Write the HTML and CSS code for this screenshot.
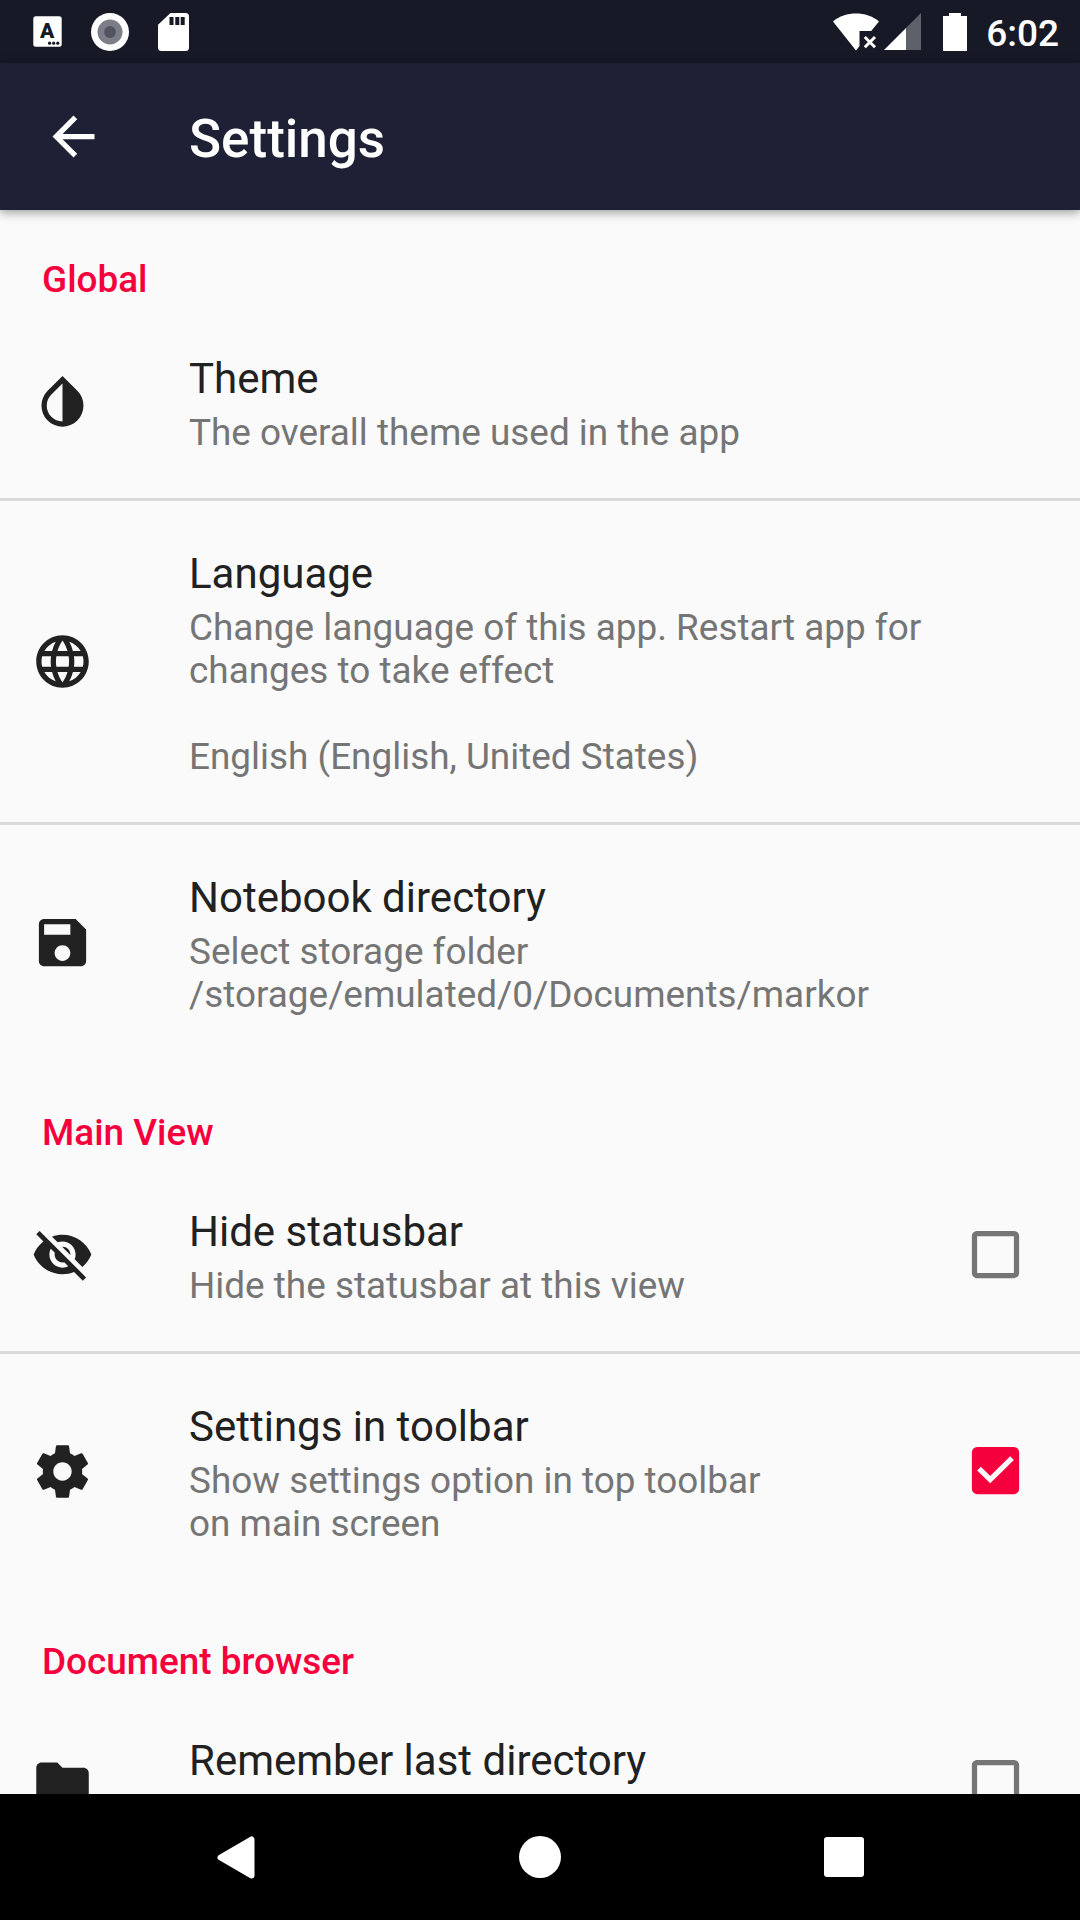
FILE: index.html
```html
<!DOCTYPE html>
<html lang="en">
<head>
<meta charset="utf-8">
<title>Settings</title>
<link rel="stylesheet" href="styles.css">
</head>
<body>
<div class="screen">
  <div class="statusbar">
    <div class="notifications">
      <svg width="29" height="31" viewBox="0 0 29 31">
        <rect x="0.3" y="0.3" width="28.4" height="30.4" rx="2.5" fill="#fff"/>
        <text class="keyboard-letter" x="14.2" y="22.4" text-anchor="middle">A</text>
        <circle cx="16.6" cy="27.2" r="1.6"/><circle cx="20.7" cy="27.2" r="1.6"/><circle cx="24.8" cy="27.2" r="1.6"/>
      </svg>
      <svg width="38" height="38" viewBox="0 0 38 38">
        <circle cx="19" cy="19" r="19" fill="#fff"/>
        <circle cx="19" cy="19" r="12.5" fill="#7c7e87"/>
        <circle cx="19" cy="19" r="5.9" fill="#51535e"/>
      </svg>
      <svg width="31" height="38" viewBox="0 0 31 38">
        <path fill="#fff" d="M12.5 0H27.5Q31 0 31 3.5V34.5Q31 38 27.5 38H3.5Q0 38 0 34.5V11.8Z"/>
        <path d="M11.5 4h4v8h-4zM17.3 4h4v8h-4zM22.7 4h4v8h-4z"/>
      </svg>
    </div>
    <div class="system">
      <svg width="46" height="38" viewBox="0 0 46 38">
        <path fill="#fff" d="M0 8.4C12.5-2.2 33.500-2.200 46 8.400L38.200 18H26.500V33L23 37.400Z"/>
        <path stroke="#fff" stroke-width="3" d="M31.800 24L42 34.200M42 24L31.800 34.200"/>
      </svg>
      <svg class="signal" width="37" height="37" viewBox="0 0 37 37">
        <path fill="#5e606a" d="M37 0V37H22V15Z"/>
        <path fill="#fff" d="M22 15V37H0Z"/>
      </svg>
      <svg class="battery" width="24" height="38" viewBox="0 0 24 38">
        <path fill="#fff" d="M6 0H18V3H24V38H0V3H6Z"/>
      </svg>
      <span class="clock">6:02</span>
    </div>
  </div>

  <header class="toolbar">
    <svg class="icon" viewBox="0 0 24 24"><path d="M20 11H7.830l5.590-5.590L12 4l-8 8 8 8 1.410-1.410L7.830 13H20v-2z"/></svg>
    <h1 class="toolbar-title">Settings</h1>
  </header>

  <main class="list">
    <section class="category">
      <h2 class="category-title">Global</h2>
      <div class="row">
        <svg class="icon" viewBox="0 0 24 24"><path d="M17.660 7.930L12 2.270 6.340 7.930c-3.120 3.120-3.120 8.190 0 11.310C7.900 20.800 9.950 21.580 12 21.580s4.100-.78 5.660-2.340c3.120-3.120 3.120-8.190 0-11.310zM12 19.590c-1.600 0-3.110-.62-4.240-1.760C6.620 16.690 6 15.190 6 13.590s.62-3.110 1.760-4.240L12 5.100v14.490z"/></svg>
        <div class="row-text">
          <div class="row-title">Theme</div>
          <div class="row-summary">The overall theme used in the app</div>
        </div>
      </div>
      <div class="row">
        <svg class="icon" viewBox="0 0 24 24"><path d="M11.990 2C6.470 2 2 6.480 2 12s4.470 10 9.990 10C17.520 22 22 17.520 22 12S17.520 2 11.990 2zm6.930 6h-2.950c-.32-1.250-.78-2.450-1.380-3.560 1.840.63 3.370 1.910 4.330 3.560zM12 4.040c.83 1.200 1.480 2.530 1.910 3.960h-3.820c.43-1.430 1.080-2.760 1.910-3.960zM4.260 14C4.100 13.360 4 12.690 4 12s.1-1.360.26-2h3.380c-.08.66-.14 1.320-.14 2s.06 1.340.14 2H4.260zm.82 2h2.950c.32 1.250.78 2.450 1.380 3.560-1.840-.63-3.370-1.900-4.330-3.560zm2.950-8H5.080c.96-1.660 2.490-2.930 4.330-3.560C8.810 5.550 8.350 6.750 8.030 8zM12 19.960c-.83-1.200-1.480-2.530-1.910-3.960h3.820c-.43 1.430-1.080 2.760-1.910 3.960zM14.340 14H9.660c-.09-.66-.16-1.320-.16-2s.07-1.350.16-2h4.680c.09.65.16 1.320.16 2s-.07 1.340-.16 2zm.25 5.560c.6-1.110 1.060-2.310 1.380-3.560h2.950c-.96 1.650-2.490 2.930-4.330 3.560zM16.360 14c.08-.66.14-1.320.14-2s-.06-1.340-.14-2h3.380c.16.64.26 1.310.26 2s-.1 1.360-.26 2h-3.380z"/></svg>
        <div class="row-text">
          <div class="row-title">Language</div>
          <div class="row-summary">Change language of this app. Restart app for<br>changes to take effect<br><br>English (English, United States)</div>
        </div>
      </div>
      <div class="row">
        <svg class="icon" viewBox="0 0 24 24"><path d="M17 3H5c-1.110 0-2 .9-2 2v14c0 1.100.89 2 2 2h14c1.100 0 2-.9 2-2V7l-4-4zm-5 16c-1.660 0-3-1.340-3-3s1.340-3 3-3 3 1.340 3 3-1.340 3-3 3zm3-10H5V5h10v4z"/></svg>
        <div class="row-text">
          <div class="row-title">Notebook directory</div>
          <div class="row-summary">Select storage folder<br>/storage/emulated/0/Documents/markor</div>
        </div>
      </div>
    </section>

    <section class="category">
      <h2 class="category-title">Main View</h2>
      <div class="row">
        <svg class="icon" viewBox="0 0 24 24"><path d="M12 7c2.760 0 5 2.240 5 5 0 .65-.13 1.260-.36 1.830l2.920 2.920c1.510-1.260 2.700-2.890 3.430-4.750-1.730-4.390-6-7.500-11-7.500-1.400 0-2.740.25-3.980.7l2.160 2.160C10.740 7.130 11.350 7 12 7zM2 4.270l2.280 2.280.46.46C3.080 8.300 1.780 10.020 1 12c1.730 4.390 6 7.500 11 7.500 1.550 0 3.030-.3 4.380-.84l.42.42L19.730 22 21 20.730 3.270 3 2 4.270zM7.530 9.800l1.550 1.550c-.05.21-.08.43-.08.650 0 1.660 1.340 3 3 3 .22 0 .44-.03.650-.08l1.550 1.550c-.67.33-1.410.53-2.200.53-2.760 0-5-2.240-5-5 0-.79.2-1.530.53-2.200zm4.310-.78l3.150 3.150.02-.16c0-1.660-1.340-3-3-3l-.17.01z"/></svg>
        <div class="row-text">
          <div class="row-title">Hide statusbar</div>
          <div class="row-summary">Hide the statusbar at this view</div>
        </div>
        <svg class="icon checkbox" viewBox="0 0 24 24"><path d="M19 5v14H5V5h14m0-2H5c-1.100 0-2 .9-2 2v14c0 1.100.9 2 2 2h14c1.100 0 2-.9 2-2V5c0-1.100-.9-2-2-2z"/></svg>
      </div>
      <div class="row">
        <svg class="icon" viewBox="0 0 24 24"><path d="M19.430 12.980c.04-.32.07-.64.07-.98s-.03-.66-.07-.98l2.110-1.650c.19-.15.240-.42.120-.64l-2-3.460c-.12-.22-.39-.3-.61-.22l-2.490 1c-.52-.4-1.080-.73-1.690-.98l-.38-2.650C14.460 2.180 14.250 2 14 2h-4c-.25 0-.46.18-.49.42l-.38 2.650c-.61.25-1.170.59-1.690.98l-2.490-1c-.23-.09-.49 0-.61.22l-2 3.460c-.13.22-.07.49.12.64l2.110 1.650c-.04.32-.07.65-.07.98s.03.66.07.98l-2.110 1.650c-.19.15-.24.42-.12.64l2 3.460c.12.22.39.3.61.22l2.490-1c.52.4 1.080.73 1.690.98l.38 2.650c.03.24.24.42.49.42h4c.25 0 .46-.18.49-.42l.38-2.650c.61-.25 1.170-.59 1.690-.98l2.490 1c.23.09.49 0 .61-.22l2-3.460c.12-.22.07-.49-.12-.64l-2.110-1.650zM12 15.500c-1.930 0-3.500-1.570-3.500-3.500s1.570-3.500 3.500-3.500 3.500 1.570 3.500 3.500-1.570 3.500-3.500 3.500z"/></svg>
        <div class="row-text">
          <div class="row-title">Settings in toolbar</div>
          <div class="row-summary">Show settings option in top toolbar<br>on main screen</div>
        </div>
        <svg class="icon checkbox checked" viewBox="0 0 24 24"><rect x="3" y="3" width="18" height="18" rx="2"/><path class="tick" d="M5.700 11.300L10 15.500L18.300 7.300"/></svg>
      </div>
    </section>

    <section class="category">
      <h2 class="category-title">Document browser</h2>
      <div class="row">
        <svg class="icon" viewBox="0 0 24 24"><path d="M10 4H4c-1.100 0-1.990.9-1.990 2L2 18c0 1.100.9 2 2 2h16c1.100 0 2-.9 2-2V8c0-1.100-.9-2-2-2h-8l-2-2z"/></svg>
        <div class="row-text">
          <div class="row-title">Remember last directory</div>
        </div>
        <svg class="icon checkbox" viewBox="0 0 24 24"><path d="M19 5v14H5V5h14m0-2H5c-1.100 0-2 .9-2 2v14c0 1.100.9 2 2 2h14c1.100 0 2-.9 2-2V5c0-1.100-.9-2-2-2z"/></svg>
      </div>
    </section>
  </main>

  <nav class="navbar">
    <div class="nav-button"><svg width="38" height="43" viewBox="0 0 38 43"><path d="M3.500 21.500L34.500 3.500V39.500Z" fill="#fff" stroke="#fff" stroke-width="6" stroke-linejoin="round"/></svg></div>
    <div class="nav-button"><svg width="42" height="42" viewBox="0 0 42 42"><circle cx="21" cy="21" r="21" fill="#fff"/></svg></div>
    <div class="nav-button"><svg width="40" height="40" viewBox="0 0 40 40"><rect width="40" height="40" rx="3" fill="#fff"/></svg></div>
  </nav>
</div>
</body>
</html>
```
FILE: styles.css
```css
* { box-sizing: border-box; }

body {
  margin: 0;
  font-family: Roboto, "Liberation Sans", sans-serif;
  background: #fafafa;
}

svg { display: block; flex: none; }

.screen {
  width: 1080px;
  height: 1920px;
  display: flex;
  flex-direction: column;
  overflow: hidden;
}

.statusbar {
  flex: none;
  height: 63px;
  padding: 0 21px 0 33px;
  display: flex;
  justify-content: space-between;
  align-items: center;
  background: #171926;
  color: #fff;
  fill: #171926;
}

.notifications { display: flex; align-items: center; gap: 29px; }

.system { display: flex; align-items: center; }
.signal { margin-left: 5px; }
.battery { margin-left: 22px; }

.keyboard-letter { font-size: 21px; font-weight: 900; }

.clock {
  margin-left: 19px;
  padding-top: 3px;
  font-size: 37px;
  font-weight: 500;
  line-height: 43px;
}

.toolbar {
  flex: none;
  height: 147px;
  padding-left: 42px;
  display: flex;
  align-items: center;
  gap: 84px;
  background: #1e2135;
  color: #fff;
  box-shadow: 0 2px 10px rgba(0, 0, 0, 0.42);
  z-index: 1;
}

.toolbar-title {
  margin: 0;
  padding-top: 4px;
  font-size: 53px;
  font-weight: 500;
  line-height: 62px;
}

.icon { width: 63px; height: 63px; fill: currentColor; }

.list {
  flex: 1;
  min-height: 0;
  overflow: hidden;
  color: #212121;
}

.category + .category { margin-top: 3px; }

.category-title {
  margin: 0;
  padding: 48px 42px 5px;
  font-size: 36.9px;
  font-weight: 500;
  line-height: 43px;
  color: #f5003d;
}

.row {
  min-height: 192px;
  padding: 0 53px 0 31px;
  display: flex;
  align-items: center;
}

.row + .row { border-top: 3px solid #dadada; }

.row .icon { margin-bottom: 1px; }
.row .checkbox { margin-bottom: 2px; }

.row-text {
  flex: 1;
  align-self: flex-start;
  padding: 48px 0 44px 95px;
  white-space: nowrap;
}

.row-title { font-size: 42px; line-height: 49px; }

.row-summary {
  margin-top: 8px;
  font-size: 36.9px;
  line-height: 43px;
  color: #757575;
}

.checkbox { color: #757575; }
.checked { color: #f5003d; }

.tick { fill: none; stroke: #fafafa; stroke-width: 2; }

.navbar {
  flex: none;
  height: 126px;
  display: flex;
  justify-content: center;
  align-items: center;
  background: #000;
  z-index: 1;
}

.nav-button { width: 304px; display: flex; justify-content: center; }
```
